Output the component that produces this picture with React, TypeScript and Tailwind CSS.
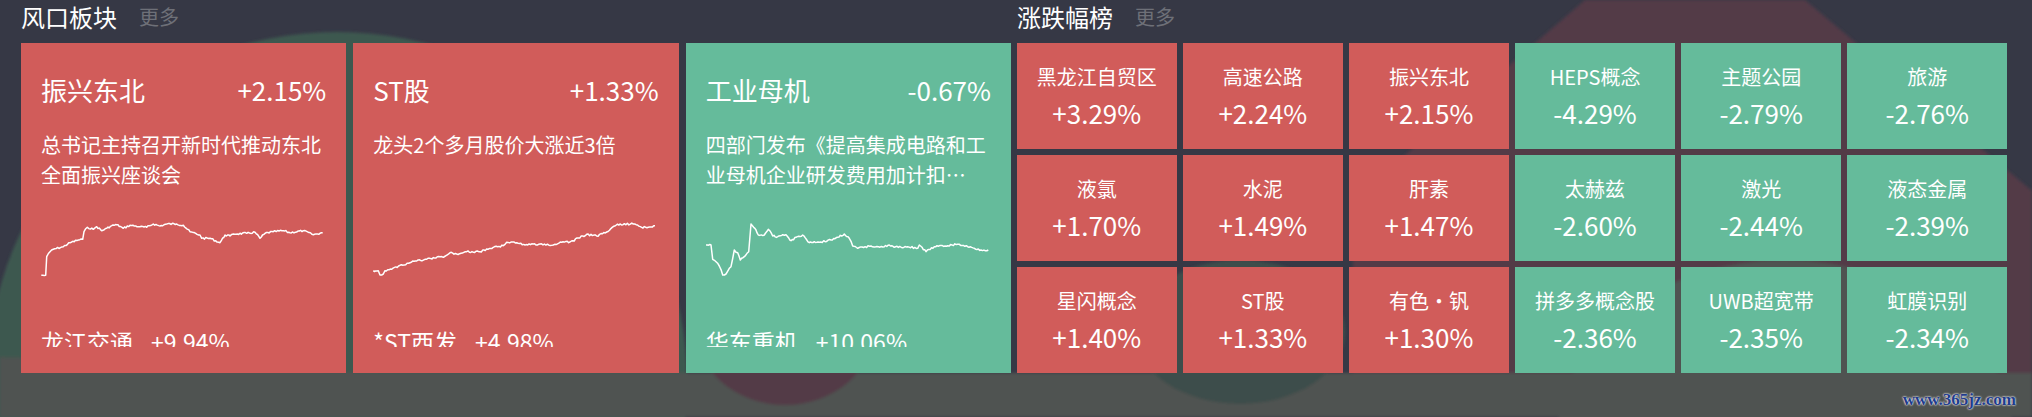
import React from "react";

type Pt = [number, number];

// page-coordinate key points of each intraday line, traced from the picture
const line1: Pt[] = [
  [41.3, 275.3], [45.7, 275.3], [46.7, 256.7], [50, 251.7], [53.3, 249.3], [63.3, 246.7], [70, 242.7],
  [78.3, 240], [82.7, 239.3], [84, 231.7], [87.3, 227.3], [93.3, 229.3], [96.7, 226.7], [101.7, 230.7],
  [106.7, 228.3], [111.7, 225.7], [116.7, 224.7], [123.3, 228.3], [130, 225.3], [140, 226.7], [146.7, 227.3],
  [153.3, 224], [160, 226], [166.7, 224], [176.7, 224], [183.3, 225.3], [190, 231.7], [200, 235], [201.7, 238.3],
  [210, 238.3], [220, 242.7], [225, 235], [230, 236], [233.3, 234], [246.7, 233.3], [255, 232.3], [260, 238.3],
  [265, 233.3], [273.3, 231.7], [283.3, 230.7], [290, 232.7], [303.3, 230.7], [313.3, 234.7], [322.7, 232.7],
];

const line2: Pt[] = [
  [373.3, 270.7], [378.3, 270.7], [380, 275], [383.3, 274], [385, 270.7], [391.7, 269.3], [400, 265.3],
  [410, 262.7], [416.7, 261], [426.7, 259.3], [440, 256.7], [443.3, 257.3], [450, 252.7], [456.7, 254],
  [466.7, 251.7], [480, 251.7], [493.3, 247.3], [503.3, 245.7], [506.7, 242.3], [516.7, 242.7], [525, 245],
  [540, 244], [553.3, 245], [561.7, 242.3], [570, 242], [586.7, 234.3], [596.7, 236], [606.7, 232], [615, 226],
  [620, 224], [633.3, 224], [641.7, 227.3], [648.3, 227.3], [655, 225.7],
];

const line3: Pt[] = [
  [705, 245], [710, 245], [711.7, 259.3], [715, 261.7], [718.3, 266], [721.7, 275], [725, 274], [728.3, 268.3],
  [730, 266.7], [733.3, 250], [736.7, 252.7], [739.3, 260], [743.3, 256.7], [746, 253.3], [747.7, 251.7],
  [750, 224], [752.7, 227.3], [755, 230], [757.3, 235], [763.3, 235], [767.3, 229.3], [771.7, 236], [776.7, 236.7],
  [781.7, 234.7], [785, 234.7], [790, 240.7], [795, 237.3], [801.7, 235], [808.3, 242.7], [813.3, 241.7],
  [818.3, 242.3], [830, 240], [836.7, 237.3], [843.3, 234], [848.3, 238.3], [851.7, 246], [856.7, 248.3],
  [870, 246], [883.3, 246.7], [888.3, 245], [893.3, 247.3], [906.7, 246.7], [916.7, 248.3], [918.3, 245],
  [925, 251.7], [933.3, 246.7], [946.7, 245.7], [956.7, 244.3], [966.7, 246.7], [973.3, 248.3], [980, 250],
  [987.3, 250],
];

function rng(seed: number) {
  let s = seed;
  return () => {
    s = (s * 9301 + 49297) % 233280;
    return s / 233280;
  };
}

// interpolate the key points and add a little tick noise so it reads as a minute line
function jagged(points: Pt[], ox: number, oy: number, seed: number) {
  const r = rng(seed);
  const out: string[] = [];
  for (let i = 0; i < points.length - 1; i++) {
    const [x1, y1] = points[i];
    const [x2, y2] = points[i + 1];
    const steps = Math.max(1, Math.round(Math.abs(x2 - x1) / 1.4));
    for (let k = 0; k < steps; k++) {
      const t = k / steps;
      const x = x1 + (x2 - x1) * t;
      let y = y1 + (y2 - y1) * t;
      if (k > 0) y += (r() - 0.5) * 1.8;
      out.push(`${(x - ox).toFixed(1)},${(y - oy).toFixed(1)}`);
    }
  }
  const last = points[points.length - 1];
  out.push(`${(last[0] - ox).toFixed(1)},${(last[1] - oy).toFixed(1)}`);
  return out.join(" ");
}

const hot = [
  {
    name: "振兴东北",
    pct: "+2.15%",
    desc: "总书记主持召开新时代推动东北全面振兴座谈会",
    stock: "龙江交通",
    stockPct: "+9.94%",
    up: true,
    points: jagged(line1, 41, 215, 7),
  },
  {
    name: "ST股",
    pct: "+1.33%",
    desc: "龙头2个多月股价大涨近3倍",
    stock: "*ST西发",
    stockPct: "+4.98%",
    up: true,
    points: jagged(line2, 373, 215, 19),
  },
  {
    name: "工业母机",
    pct: "-0.67%",
    desc: "四部门发布《提高集成电路和工业母机企业研发费用加计扣…",
    stock: "华东重机",
    stockPct: "+10.06%",
    up: false,
    points: jagged(line3, 705, 215, 31),
  },
];

const board = [
  { name: "黑龙江自贸区", pct: "+3.29%", up: true },
  { name: "高速公路", pct: "+2.24%", up: true },
  { name: "振兴东北", pct: "+2.15%", up: true },
  { name: "HEPS概念", pct: "-4.29%", up: false },
  { name: "主题公园", pct: "-2.79%", up: false },
  { name: "旅游", pct: "-2.76%", up: false },
  { name: "液氯", pct: "+1.70%", up: true },
  { name: "水泥", pct: "+1.49%", up: true },
  { name: "肝素", pct: "+1.47%", up: true },
  { name: "太赫兹", pct: "-2.60%", up: false },
  { name: "激光", pct: "-2.44%", up: false },
  { name: "液态金属", pct: "-2.39%", up: false },
  { name: "星闪概念", pct: "+1.40%", up: true },
  { name: "ST股", pct: "+1.33%", up: true },
  { name: "有色・钒", pct: "+1.30%", up: true },
  { name: "拼多多概念股", pct: "-2.36%", up: false },
  { name: "UWB超宽带", pct: "-2.35%", up: false },
  { name: "虹膜识别", pct: "-2.34%", up: false },
];

function Backdrop() {
  return (
    <svg className="absolute inset-0" width="2032" height="417" viewBox="0 0 2032 417">
      <defs>
        <filter id="soft">
          <feGaussianBlur stdDeviation="1.5" />
        </filter>
      </defs>
      <rect width="2032" height="417" fill="#363845" />
      <g filter="url(#soft)">
        <circle cx="337" cy="382" r="350" fill="#3d5850" />
        <path d="M1585 0 L1805 0 L2032 191 L2032 417 L1353 417 L1353 200 Z" fill="#523a47" />
        <path d="M0 357 C150 362 300 373 420 373 L2032 373 L2032 417 L0 417 Z" fill="#4f5351" />
        <ellipse cx="1785" cy="440" rx="228" ry="180" fill="#4f5351" />
        <ellipse cx="785" cy="322" rx="92" ry="83" fill="#523a47" />
        <ellipse cx="1240" cy="332" rx="105" ry="72" fill="#3e4e4b" />
      </g>
    </svg>
  );
}

function HotCard({ item }: { item: (typeof hot)[number] }) {
  return (
    <div className={`${item.up ? "bg-[#d15c5a]" : "bg-[#65bb9b]"} overflow-hidden px-5 pt-[29px] text-white`}>
      <div className="flex h-[36px] items-center justify-between text-[26px] leading-[36px]">
        <span>{item.name}</span>
        <span>{item.pct}</span>
      </div>
      <p className="mt-[22px] h-[60px] overflow-hidden text-[20px] leading-[30px]">{item.desc}</p>
      <svg className="mt-[25px] block" width="286" height="70" viewBox="0 0 286 70">
        <polyline points={item.points} fill="none" stroke="#fff" strokeWidth="1.5" strokeLinejoin="round" />
      </svg>
      <div className="mt-[43px] flex h-[19px] gap-[18px] overflow-hidden text-[23px] leading-[26px]">
        <span>{item.stock}</span>
        <span>{item.stockPct}</span>
      </div>
    </div>
  );
}

export default function App() {
  return (
    <div className="relative h-[417px] w-[2032px] overflow-hidden font-['Noto_Sans_CJK_SC','Noto_Sans',sans-serif]">
      <Backdrop />

      <div className="relative ml-[21px] w-[1986px]">
        <div className="flex h-[43px] gap-[6px]">
          <div className="flex h-[34px] w-[990px] items-center">
            <span className="text-[24px] text-white">风口板块</span>
            <span className="ml-[22px] text-[20px] text-[#6e7078]">更多</span>
          </div>
          <div className="flex h-[34px] w-[990px] items-center">
            <span className="text-[24px] text-white">涨跌幅榜</span>
            <span className="ml-[22px] text-[20px] text-[#6e7078]">更多</span>
          </div>
        </div>

        <div className="flex h-[330px] gap-[6px]">
          <div className="grid w-[990px] grid-cols-3 gap-[7px]">
            {hot.map(item => (
              <HotCard key={item.name} item={item} />
            ))}
          </div>
          <div className="grid w-[990px] grid-cols-6 grid-rows-3 gap-x-[6.6px] gap-y-[6px]">
            {board.map(b => (
              <div
                key={b.name}
                className={`${b.up ? "bg-[#d15c5a]" : "bg-[#65bb9b]"} flex flex-col items-center pt-[19px] text-white`}
              >
                <span className="text-[20px] leading-[30px]">{b.name}</span>
                <span className="text-[26px] leading-[42px]">{b.pct}</span>
              </div>
            ))}
          </div>
        </div>
      </div>

      <div className="absolute bottom-[5px] right-[16px] font-['Liberation_Serif',serif] text-[17px] font-bold text-[#1f3c8c] [text-shadow:0_0_2px_#fff,0_0_2px_#fff]">
        www.365jz.com
      </div>
    </div>
  );
}
